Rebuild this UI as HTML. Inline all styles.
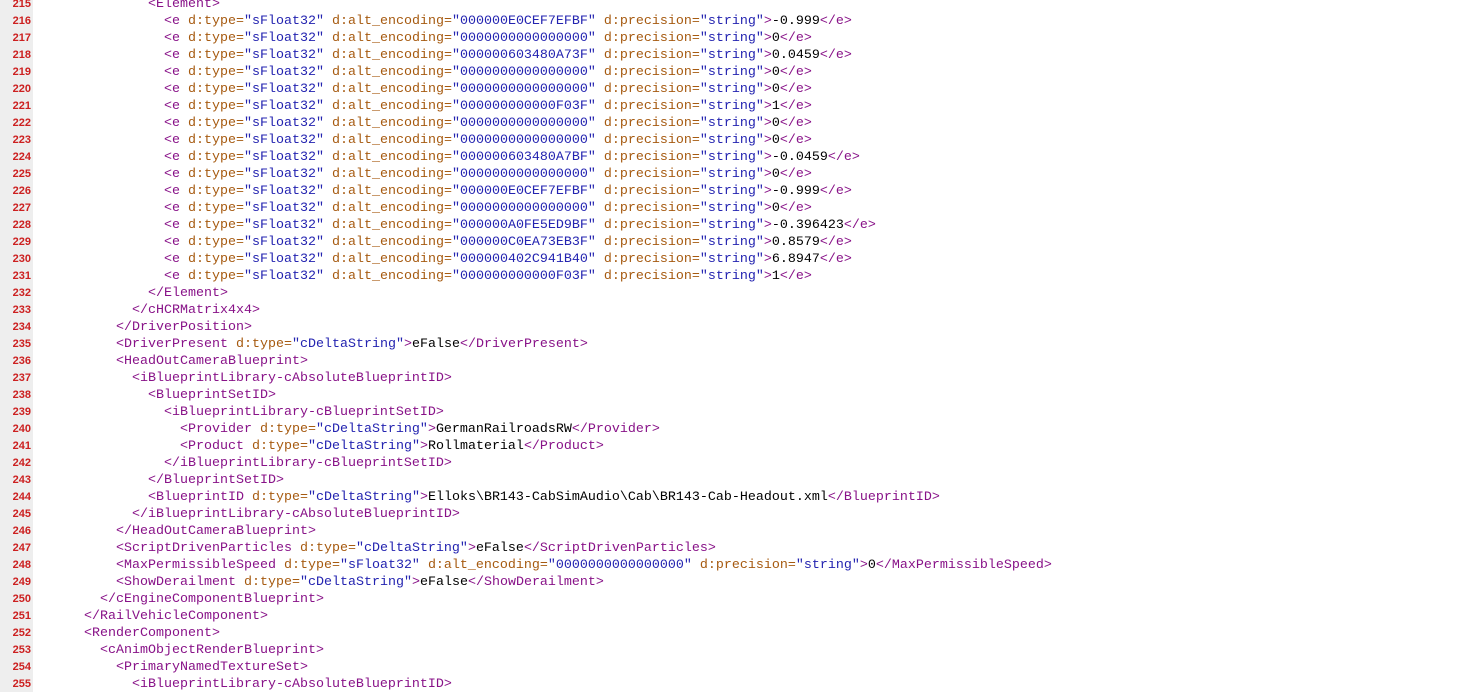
<!DOCTYPE html>
<html><head><meta charset="utf-8"><style>
html,body{margin:0;padding:0;background:#fff;width:1471px;height:692px;overflow:hidden}
.g{position:absolute;left:0;top:0;width:33px;height:692px;background:#eeeeee}
.c{position:absolute;left:0;top:-4px;width:1471px;font-family:"Liberation Mono",monospace;font-size:13.33px;line-height:17px}
.l{height:17px;position:relative}
.n{position:absolute;left:0;width:31px;text-align:right;color:#cc2020;font-family:"Liberation Sans",sans-serif;font-size:11px;font-weight:bold}
.t{position:absolute;left:36px;color:#000;white-space:pre}
.k{color:#881288}.a{color:#a65a10}.v{color:#2323b0}
</style></head><body><div class="g"></div><div class="c">
<div class="l"><span class="n">215</span><span class="t">              <span class="k">&lt;Element&gt;</span></span></div>
<div class="l"><span class="n">216</span><span class="t">                <span class="k">&lt;e</span> <span class="a">d:type=</span><span class="v">"sFloat32"</span> <span class="a">d:alt_encoding=</span><span class="v">"000000E0CEF7EFBF"</span> <span class="a">d:precision=</span><span class="v">"string"</span><span class="k">&gt;</span>-0.999<span class="k">&lt;/e&gt;</span></span></div>
<div class="l"><span class="n">217</span><span class="t">                <span class="k">&lt;e</span> <span class="a">d:type=</span><span class="v">"sFloat32"</span> <span class="a">d:alt_encoding=</span><span class="v">"0000000000000000"</span> <span class="a">d:precision=</span><span class="v">"string"</span><span class="k">&gt;</span>0<span class="k">&lt;/e&gt;</span></span></div>
<div class="l"><span class="n">218</span><span class="t">                <span class="k">&lt;e</span> <span class="a">d:type=</span><span class="v">"sFloat32"</span> <span class="a">d:alt_encoding=</span><span class="v">"000000603480A73F"</span> <span class="a">d:precision=</span><span class="v">"string"</span><span class="k">&gt;</span>0.0459<span class="k">&lt;/e&gt;</span></span></div>
<div class="l"><span class="n">219</span><span class="t">                <span class="k">&lt;e</span> <span class="a">d:type=</span><span class="v">"sFloat32"</span> <span class="a">d:alt_encoding=</span><span class="v">"0000000000000000"</span> <span class="a">d:precision=</span><span class="v">"string"</span><span class="k">&gt;</span>0<span class="k">&lt;/e&gt;</span></span></div>
<div class="l"><span class="n">220</span><span class="t">                <span class="k">&lt;e</span> <span class="a">d:type=</span><span class="v">"sFloat32"</span> <span class="a">d:alt_encoding=</span><span class="v">"0000000000000000"</span> <span class="a">d:precision=</span><span class="v">"string"</span><span class="k">&gt;</span>0<span class="k">&lt;/e&gt;</span></span></div>
<div class="l"><span class="n">221</span><span class="t">                <span class="k">&lt;e</span> <span class="a">d:type=</span><span class="v">"sFloat32"</span> <span class="a">d:alt_encoding=</span><span class="v">"000000000000F03F"</span> <span class="a">d:precision=</span><span class="v">"string"</span><span class="k">&gt;</span>1<span class="k">&lt;/e&gt;</span></span></div>
<div class="l"><span class="n">222</span><span class="t">                <span class="k">&lt;e</span> <span class="a">d:type=</span><span class="v">"sFloat32"</span> <span class="a">d:alt_encoding=</span><span class="v">"0000000000000000"</span> <span class="a">d:precision=</span><span class="v">"string"</span><span class="k">&gt;</span>0<span class="k">&lt;/e&gt;</span></span></div>
<div class="l"><span class="n">223</span><span class="t">                <span class="k">&lt;e</span> <span class="a">d:type=</span><span class="v">"sFloat32"</span> <span class="a">d:alt_encoding=</span><span class="v">"0000000000000000"</span> <span class="a">d:precision=</span><span class="v">"string"</span><span class="k">&gt;</span>0<span class="k">&lt;/e&gt;</span></span></div>
<div class="l"><span class="n">224</span><span class="t">                <span class="k">&lt;e</span> <span class="a">d:type=</span><span class="v">"sFloat32"</span> <span class="a">d:alt_encoding=</span><span class="v">"000000603480A7BF"</span> <span class="a">d:precision=</span><span class="v">"string"</span><span class="k">&gt;</span>-0.0459<span class="k">&lt;/e&gt;</span></span></div>
<div class="l"><span class="n">225</span><span class="t">                <span class="k">&lt;e</span> <span class="a">d:type=</span><span class="v">"sFloat32"</span> <span class="a">d:alt_encoding=</span><span class="v">"0000000000000000"</span> <span class="a">d:precision=</span><span class="v">"string"</span><span class="k">&gt;</span>0<span class="k">&lt;/e&gt;</span></span></div>
<div class="l"><span class="n">226</span><span class="t">                <span class="k">&lt;e</span> <span class="a">d:type=</span><span class="v">"sFloat32"</span> <span class="a">d:alt_encoding=</span><span class="v">"000000E0CEF7EFBF"</span> <span class="a">d:precision=</span><span class="v">"string"</span><span class="k">&gt;</span>-0.999<span class="k">&lt;/e&gt;</span></span></div>
<div class="l"><span class="n">227</span><span class="t">                <span class="k">&lt;e</span> <span class="a">d:type=</span><span class="v">"sFloat32"</span> <span class="a">d:alt_encoding=</span><span class="v">"0000000000000000"</span> <span class="a">d:precision=</span><span class="v">"string"</span><span class="k">&gt;</span>0<span class="k">&lt;/e&gt;</span></span></div>
<div class="l"><span class="n">228</span><span class="t">                <span class="k">&lt;e</span> <span class="a">d:type=</span><span class="v">"sFloat32"</span> <span class="a">d:alt_encoding=</span><span class="v">"000000A0FE5ED9BF"</span> <span class="a">d:precision=</span><span class="v">"string"</span><span class="k">&gt;</span>-0.396423<span class="k">&lt;/e&gt;</span></span></div>
<div class="l"><span class="n">229</span><span class="t">                <span class="k">&lt;e</span> <span class="a">d:type=</span><span class="v">"sFloat32"</span> <span class="a">d:alt_encoding=</span><span class="v">"000000C0EA73EB3F"</span> <span class="a">d:precision=</span><span class="v">"string"</span><span class="k">&gt;</span>0.8579<span class="k">&lt;/e&gt;</span></span></div>
<div class="l"><span class="n">230</span><span class="t">                <span class="k">&lt;e</span> <span class="a">d:type=</span><span class="v">"sFloat32"</span> <span class="a">d:alt_encoding=</span><span class="v">"000000402C941B40"</span> <span class="a">d:precision=</span><span class="v">"string"</span><span class="k">&gt;</span>6.8947<span class="k">&lt;/e&gt;</span></span></div>
<div class="l"><span class="n">231</span><span class="t">                <span class="k">&lt;e</span> <span class="a">d:type=</span><span class="v">"sFloat32"</span> <span class="a">d:alt_encoding=</span><span class="v">"000000000000F03F"</span> <span class="a">d:precision=</span><span class="v">"string"</span><span class="k">&gt;</span>1<span class="k">&lt;/e&gt;</span></span></div>
<div class="l"><span class="n">232</span><span class="t">              <span class="k">&lt;/Element&gt;</span></span></div>
<div class="l"><span class="n">233</span><span class="t">            <span class="k">&lt;/cHCRMatrix4x4&gt;</span></span></div>
<div class="l"><span class="n">234</span><span class="t">          <span class="k">&lt;/DriverPosition&gt;</span></span></div>
<div class="l"><span class="n">235</span><span class="t">          <span class="k">&lt;DriverPresent</span> <span class="a">d:type=</span><span class="v">"cDeltaString"</span><span class="k">&gt;</span>eFalse<span class="k">&lt;/DriverPresent&gt;</span></span></div>
<div class="l"><span class="n">236</span><span class="t">          <span class="k">&lt;HeadOutCameraBlueprint&gt;</span></span></div>
<div class="l"><span class="n">237</span><span class="t">            <span class="k">&lt;iBlueprintLibrary-cAbsoluteBlueprintID&gt;</span></span></div>
<div class="l"><span class="n">238</span><span class="t">              <span class="k">&lt;BlueprintSetID&gt;</span></span></div>
<div class="l"><span class="n">239</span><span class="t">                <span class="k">&lt;iBlueprintLibrary-cBlueprintSetID&gt;</span></span></div>
<div class="l"><span class="n">240</span><span class="t">                  <span class="k">&lt;Provider</span> <span class="a">d:type=</span><span class="v">"cDeltaString"</span><span class="k">&gt;</span>GermanRailroadsRW<span class="k">&lt;/Provider&gt;</span></span></div>
<div class="l"><span class="n">241</span><span class="t">                  <span class="k">&lt;Product</span> <span class="a">d:type=</span><span class="v">"cDeltaString"</span><span class="k">&gt;</span>Rollmaterial<span class="k">&lt;/Product&gt;</span></span></div>
<div class="l"><span class="n">242</span><span class="t">                <span class="k">&lt;/iBlueprintLibrary-cBlueprintSetID&gt;</span></span></div>
<div class="l"><span class="n">243</span><span class="t">              <span class="k">&lt;/BlueprintSetID&gt;</span></span></div>
<div class="l"><span class="n">244</span><span class="t">              <span class="k">&lt;BlueprintID</span> <span class="a">d:type=</span><span class="v">"cDeltaString"</span><span class="k">&gt;</span>Elloks\BR143-CabSimAudio\Cab\BR143-Cab-Headout.xml<span class="k">&lt;/BlueprintID&gt;</span></span></div>
<div class="l"><span class="n">245</span><span class="t">            <span class="k">&lt;/iBlueprintLibrary-cAbsoluteBlueprintID&gt;</span></span></div>
<div class="l"><span class="n">246</span><span class="t">          <span class="k">&lt;/HeadOutCameraBlueprint&gt;</span></span></div>
<div class="l"><span class="n">247</span><span class="t">          <span class="k">&lt;ScriptDrivenParticles</span> <span class="a">d:type=</span><span class="v">"cDeltaString"</span><span class="k">&gt;</span>eFalse<span class="k">&lt;/ScriptDrivenParticles&gt;</span></span></div>
<div class="l"><span class="n">248</span><span class="t">          <span class="k">&lt;MaxPermissibleSpeed</span> <span class="a">d:type=</span><span class="v">"sFloat32"</span> <span class="a">d:alt_encoding=</span><span class="v">"0000000000000000"</span> <span class="a">d:precision=</span><span class="v">"string"</span><span class="k">&gt;</span>0<span class="k">&lt;/MaxPermissibleSpeed&gt;</span></span></div>
<div class="l"><span class="n">249</span><span class="t">          <span class="k">&lt;ShowDerailment</span> <span class="a">d:type=</span><span class="v">"cDeltaString"</span><span class="k">&gt;</span>eFalse<span class="k">&lt;/ShowDerailment&gt;</span></span></div>
<div class="l"><span class="n">250</span><span class="t">        <span class="k">&lt;/cEngineComponentBlueprint&gt;</span></span></div>
<div class="l"><span class="n">251</span><span class="t">      <span class="k">&lt;/RailVehicleComponent&gt;</span></span></div>
<div class="l"><span class="n">252</span><span class="t">      <span class="k">&lt;RenderComponent&gt;</span></span></div>
<div class="l"><span class="n">253</span><span class="t">        <span class="k">&lt;cAnimObjectRenderBlueprint&gt;</span></span></div>
<div class="l"><span class="n">254</span><span class="t">          <span class="k">&lt;PrimaryNamedTextureSet&gt;</span></span></div>
<div class="l"><span class="n">255</span><span class="t">            <span class="k">&lt;iBlueprintLibrary-cAbsoluteBlueprintID&gt;</span></span></div>
</div></body></html>
